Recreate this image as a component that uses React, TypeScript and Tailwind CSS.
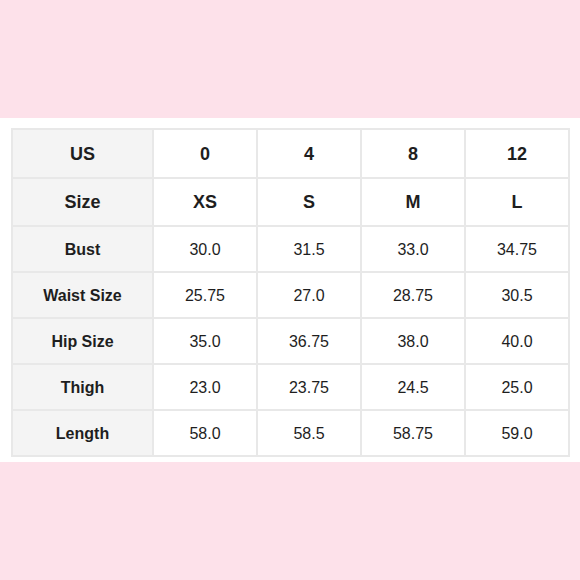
import React from "react";

const header = [
  ["US", "0", "4", "8", "12"],
  ["Size", "XS", "S", "M", "L"],
];
const rows = [
  ["Bust", "30.0", "31.5", "33.0", "34.75"],
  ["Waist Size", "25.75", "27.0", "28.75", "30.5"],
  ["Hip Size", "35.0", "36.75", "38.0", "40.0"],
  ["Thigh", "23.0", "23.75", "24.5", "25.0"],
  ["Length", "58.0", "58.5", "58.75", "59.0"],
];

export default function App() {
  return (
    <div
      className="w-[580px] h-[580px] bg-[#fde1ea] flex flex-col"
      style={{ fontFamily: '"Liberation Sans", Arial, sans-serif' }}
    >
      <div className="h-[118px]" />
      <div className="bg-white pt-[10px] pb-[5px] pl-[11px]">
        <div className="grid grid-cols-[139px_repeat(4,102px)] grid-rows-[47px_46px_repeat(5,44px)] gap-[2px] p-[2px] bg-[#e8e8e8] w-[559px] text-[#1e1e1e]">
          {header.map((r, i) =>
            r.map((c, j) => (
              <div
                key={`h${i}-${j}`}
                className={`flex items-center justify-center pt-px font-bold text-[18px] ${j === 0 ? "bg-[#f4f4f4]" : "bg-white"}`}
              >
                {c}
              </div>
            ))
          )}
          {rows.map((r, i) =>
            r.map((c, j) => (
              <div
                key={`r${i}-${j}`}
                className={`flex items-center justify-center pt-px text-[16px] ${j === 0 ? "bg-[#f4f4f4] font-bold" : "bg-white"}`}
              >
                {c}
              </div>
            ))
          )}
        </div>
      </div>
    </div>
  );
}
